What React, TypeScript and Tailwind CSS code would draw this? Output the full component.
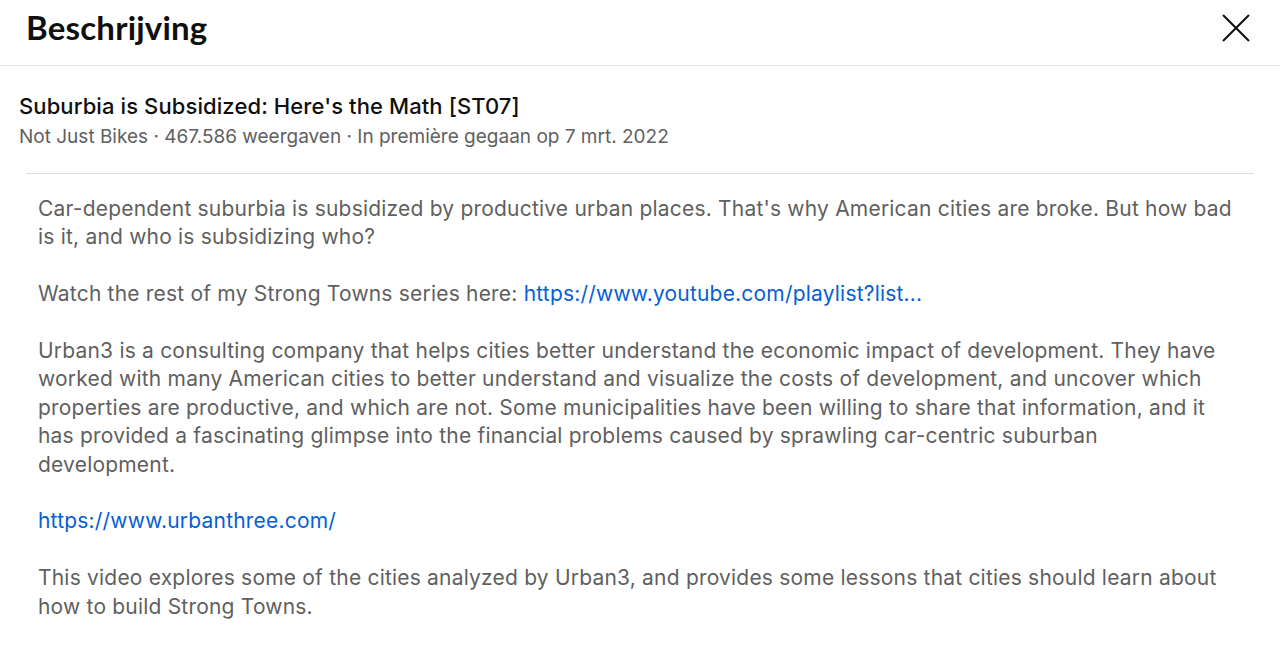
export default function App() {
  return (
    <div className="w-[1280px] h-[650px] overflow-hidden bg-white font-['Inter','Roboto',sans-serif]">
      <div className="h-[66px] flex items-center justify-between pl-[26px] pr-[28px] border-b border-[#e5e5e5]">
        <h1 className="text-[33px] font-bold text-[#0f0f0f] font-['Lato','Noto_Sans',sans-serif] tracking-[0.2px] -mt-[10px]">
          Beschrijving
        </h1>
        <button className="-mt-[10px] text-[#0f0f0f]">
          <svg width="32" height="32" viewBox="0 0 32 32" fill="none" stroke="currentColor" strokeWidth="2">
            <path d="M3 3 L29 29 M29 3 L3 29" />
          </svg>
        </button>
      </div>

      <div className="pl-[19px] pr-[26px] pt-[26px]">
        <h2 className="text-[22px] leading-[28px] font-medium text-[#0f0f0f] tracking-[0.1px]">
          Suburbia is Subsidized: Here's the Math [ST07]
        </h2>
        <p className="mt-[5px] text-[19px] leading-[24px] text-[#606060]">
          Not Just Bikes · 467.586 weergaven · In première gegaan op 7 mrt. 2022
        </p>
      </div>

      <div className="mx-[26px] mt-[24px] border-t border-[#dcdcdc]" />

      <div className="pl-[38px] pr-[42px] pt-[21px] text-[21px] leading-[28.4px] tracking-[0.2px] text-[#5f5f5f]">
        <p>
          Car-dependent suburbia is subsidized by productive urban places. That's why American cities are broke. But how bad is it, and who is subsidizing who?
        </p>
        <p className="mt-[28.4px]">
          Watch the rest of my Strong Towns series here:{' '}
          <a className="text-[#065fd4]">https://www.youtube.com/playlist?list...</a>
        </p>
        <p className="mt-[28.4px]">
          Urban3 is a consulting company that helps cities better understand the economic impact of development. They have worked with many American cities to better understand and visualize the costs of development, and uncover which properties are productive, and which are not. Some municipalities have been willing to share that information, and it has provided a fascinating glimpse into the financial problems caused by sprawling car-centric suburban development.
        </p>
        <p className="mt-[28.4px]">
          <a className="text-[#065fd4]">https://www.urbanthree.com/</a>
        </p>
        <p className="mt-[28.4px]">
          This video explores some of the cities analyzed by Urban3, and provides some lessons that cities should learn about how to build Strong Towns.
        </p>
      </div>
    </div>
  );
}
